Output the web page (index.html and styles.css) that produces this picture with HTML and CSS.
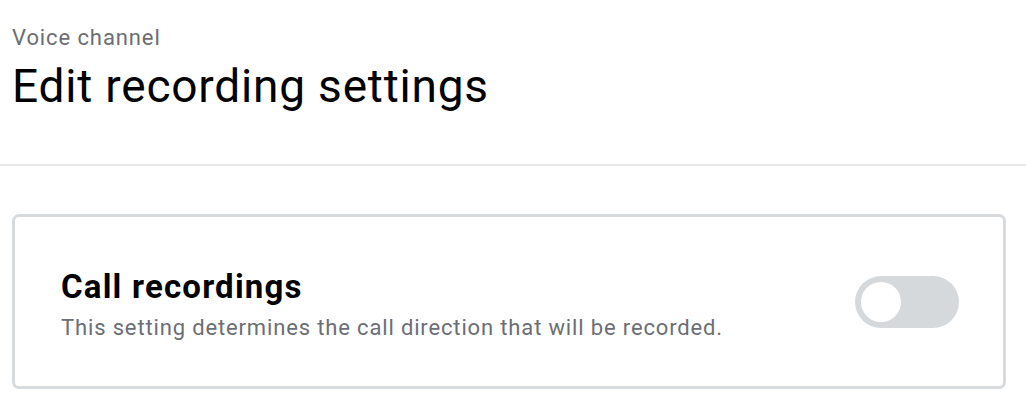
FILE: index.html
```html
<!DOCTYPE html>
<html lang="en">
<head>
    <meta charset="UTF-8">
    <meta name="viewport" content="width=device-width, initial-scale=1.0">
    <title>Edit recording settings</title>
    <link rel="stylesheet" href="styles.css">
</head>
<body>
    <div class="page">
        <div class="header">
            <p class="eyebrow">Voice channel</p>
            <h1>Edit recording settings</h1>
        </div>
        <div class="content">
            <div class="setting-card">
                <div class="setting-text">
                    <h2>Call recordings</h2>
                    <p>This setting determines the call direction that will be recorded.</p>
                </div>
                <label class="toggle">
                    <input type="checkbox">
                    <span class="track"></span>
                </label>
            </div>
        </div>
    </div>
</body>
</html>
```

FILE: styles.css
```css
*{
    margin: 0;
    padding: 0;
    box-sizing: border-box;
}
body{
    font-family: Roboto, "Noto Sans", Arial, sans-serif;
    background-color: #fff;
    color: #000;
}
.header{
    padding: 26px 12px 0;
    height: 166px;
    border-bottom: 2px solid #e8e8e8;
}
.eyebrow{
    font-size: 22px;
    line-height: 24px;
    letter-spacing: 0.9px;
    color: #6b6e74;
}
.header h1{
    font-size: 46px;
    font-weight: 400;
    line-height: 52px;
    letter-spacing: 0.8px;
    margin-top: 10px;
}
.content{
    padding: 48px 20px 0 12px;
}
.setting-card{
    display: flex;
    align-items: center;
    justify-content: space-between;
    height: 175px;
    border: 3px solid #d8dbde;
    border-radius: 7px;
    padding: 0 44px 0 46px;
}
.setting-text{
    padding-top: 6px;
}
.setting-text h2{
    font-size: 33px;
    font-weight: 700;
    line-height: 38px;
    letter-spacing: 1.2px;
}
.setting-text p{
    font-size: 22px;
    line-height: 26px;
    letter-spacing: 0.85px;
    color: #6b6e74;
    margin-top: 9px;
}
.toggle{
    position: relative;
    display: block;
    width: 104px;
    height: 52px;
    cursor: pointer;
}
.toggle input{
    display: none;
}
.track{
    display: block;
    width: 100%;
    height: 100%;
    border-radius: 26px;
    background-color: #d6d9dc;
}
.track::before{
    content: "";
    position: absolute;
    top: 6px;
    left: 6px;
    width: 40px;
    height: 40px;
    border-radius: 50%;
    background-color: #fff;
}
```
